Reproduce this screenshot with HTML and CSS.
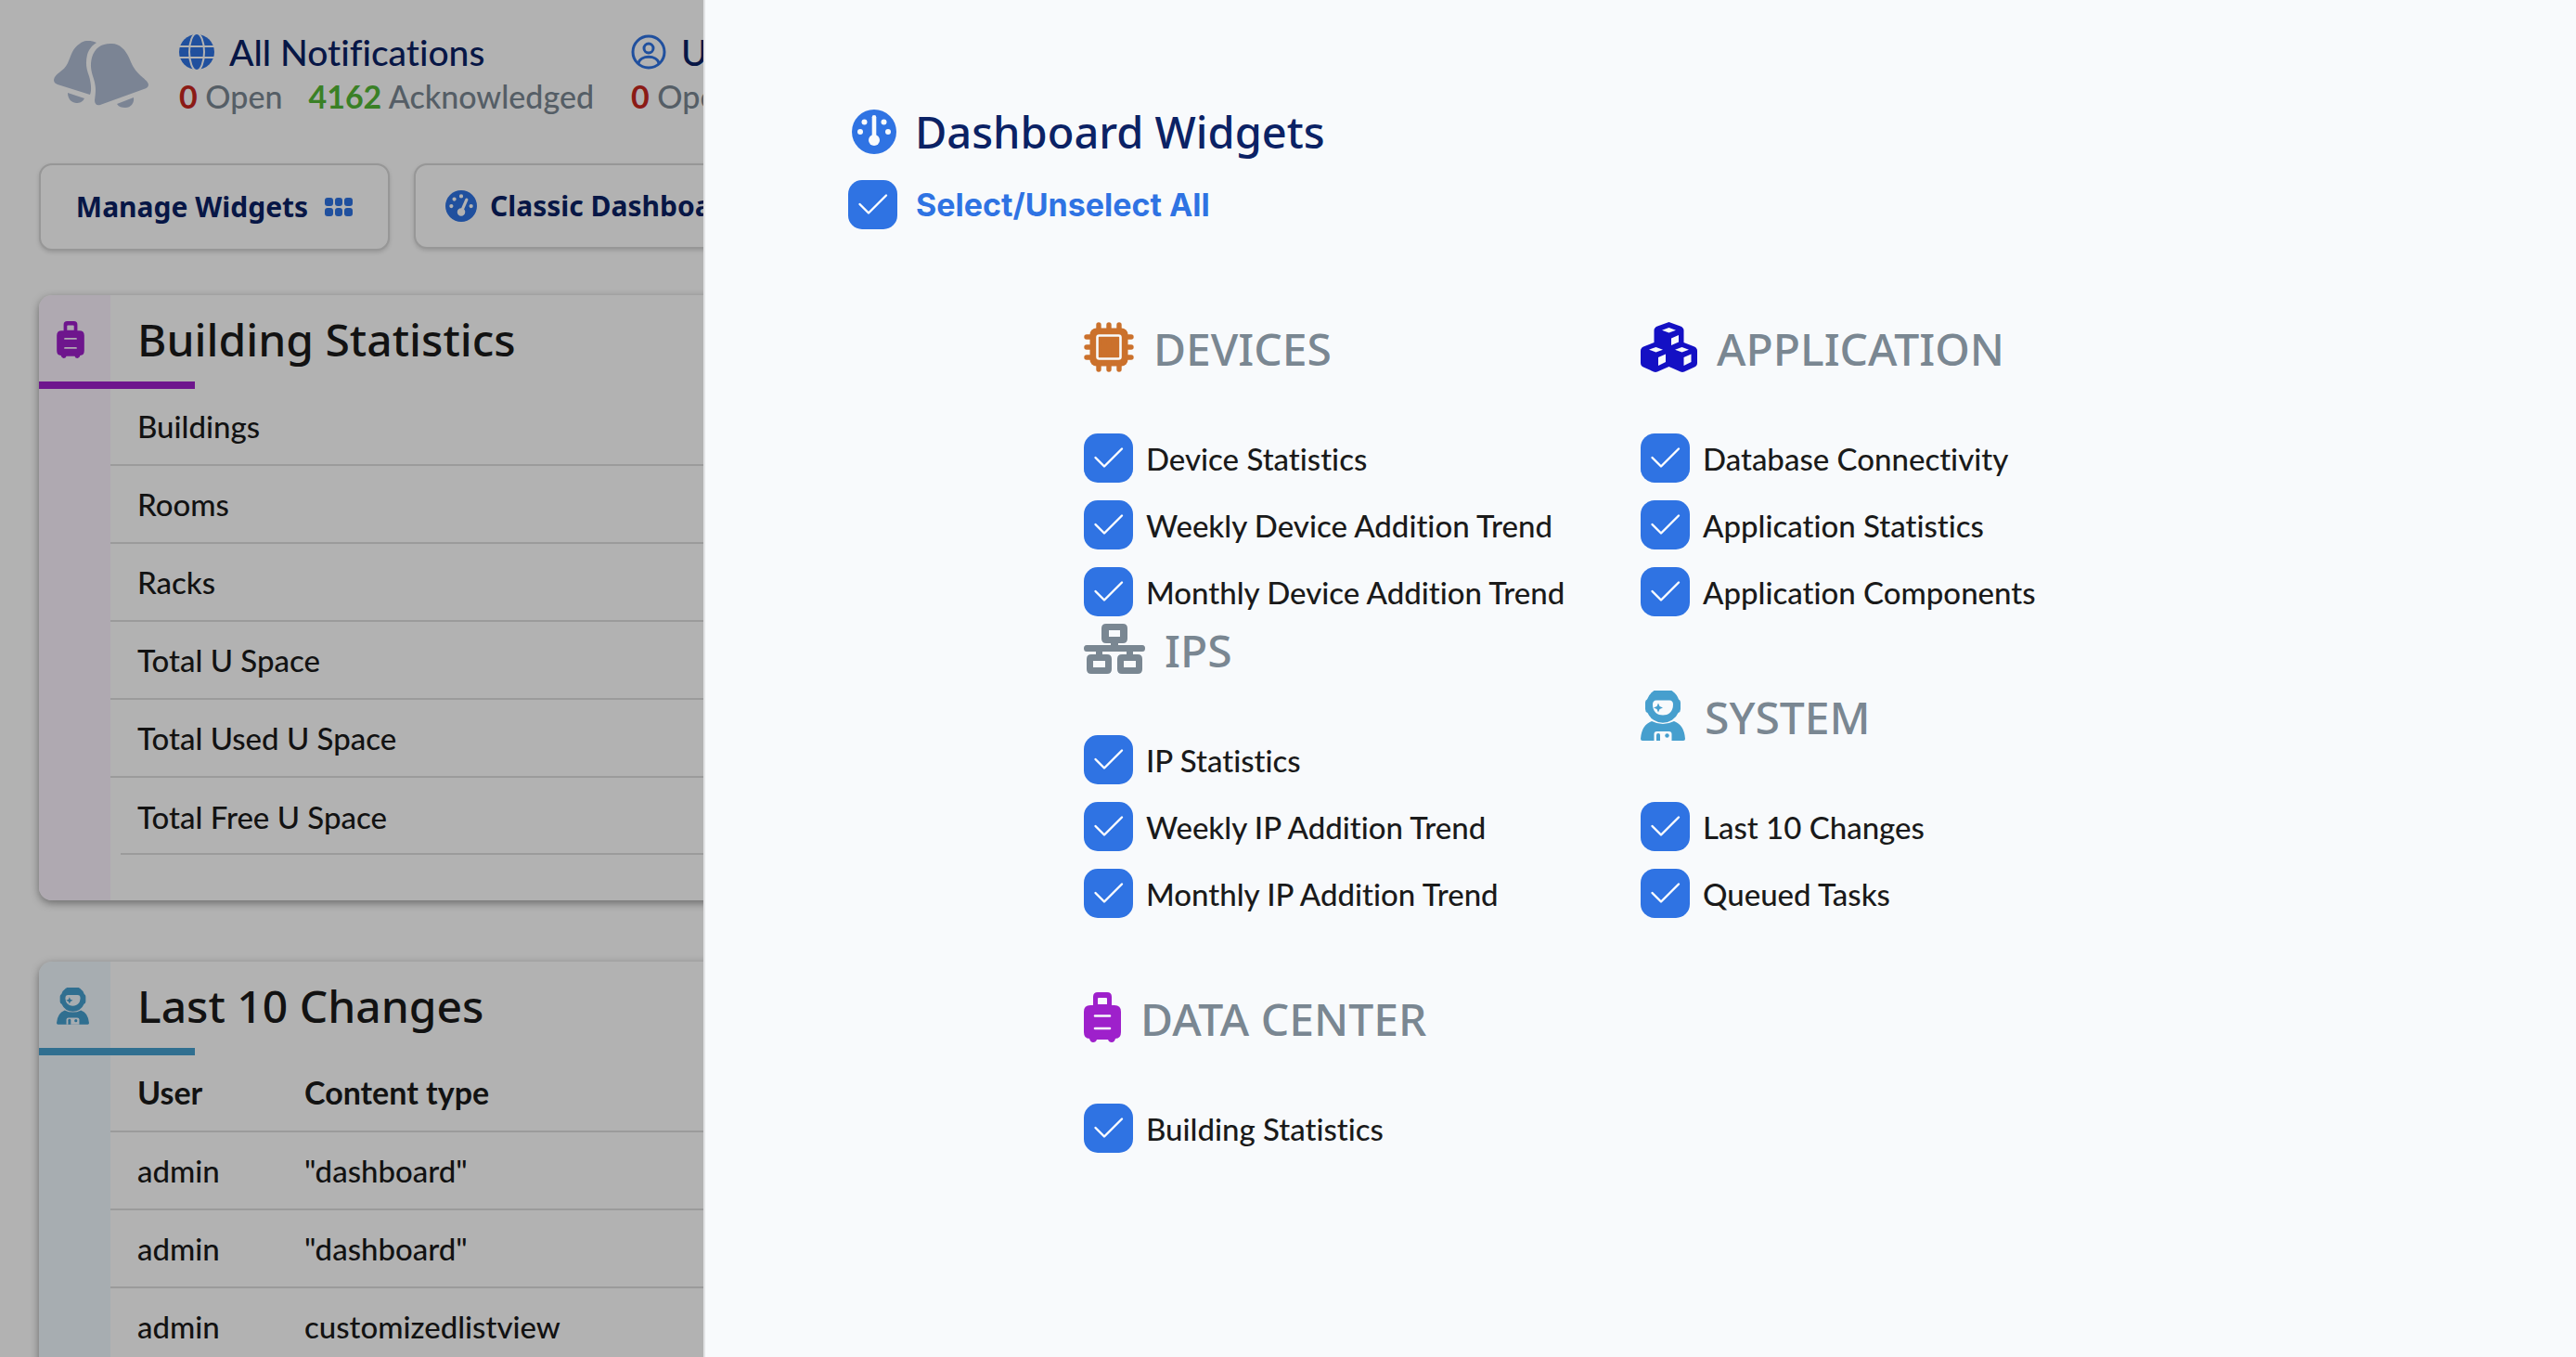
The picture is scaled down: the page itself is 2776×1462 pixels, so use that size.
FILE: index.html
```html
<!DOCTYPE html>
<html lang="en">
<head>
<meta charset="utf-8">
<title>Dashboard</title>
<link rel="stylesheet" href="styles.css">
</head>
<body>
<svg class="sprite" aria-hidden="true">
  <symbol id="i-bells" viewBox="0 0 102 72">
    <path d="M46 2C40-1 33-1 28 3C20 8 19 15 15 24C11 33 1 35 0 42C0 44 1 46 4 47L39 58C41 53 40 45 38 38C35 30 34 24 36 15C38 9 41 5 46 2Z"/>
    <path d="M61 3C70 2 77 9 81 18C84 25 86 30 92 36C97 41 101 43 102 47C102 50 100 51 97 52L50 69C46 70 44 68 44 64C45 56 46 51 43 41C40 32 39 26 41 18C44 8 51 3 61 3Z"/>
    <path d="M15 56L33 62C31 66 28 67 24 67C18 66 15 62 15 56Z"/>
    <path d="M68 68L86 61C87 67 83 72 77 72C73 72 70 71 68 68Z"/>
  </symbol>
  <symbol id="i-globe" viewBox="0 0 38 38">
    <circle cx="19" cy="19" r="19"/>
    <g class="cut-line" stroke-width="2"><path d="M0 13H38M0 25H38"/><ellipse cx="19" cy="19" rx="8" ry="20"/></g>
  </symbol>
  <symbol id="i-user" viewBox="0 0 38 38">
    <g fill="none" stroke="currentColor" stroke-width="3"><circle cx="19" cy="19" r="17"/><circle cx="19" cy="15" r="5"/><path d="M8 31C10 22 28 22 30 31"/></g>
  </symbol>
  <symbol id="i-grid" viewBox="0 0 30 20">
    <rect width="9" height="9" rx="3"/><rect x="11" width="8" height="9" rx="3"/><rect x="21" width="9" height="9" rx="3"/>
    <rect y="11" width="9" height="9" rx="3"/><rect x="11" y="11" width="8" height="9" rx="3"/><rect x="21" y="11" width="9" height="9" rx="3"/>
  </symbol>
  <symbol id="i-gauge-high" viewBox="0 0 512 512">
    <path d="M0 256a256 256 0 1 1 512 0A256 256 0 1 1 0 256zM288 96a32 32 0 1 0 -64 0 32 32 0 1 0 64 0zM256 416c35.3 0 64-28.7 64-64c0-17.4-6.9-33.1-18.1-44.6L366 161.7c5.3-12.1-.2-26.3-12.3-31.6s-26.3 .2-31.6 12.3L257.9 288c-.6 0-1.3 0-1.9 0c-35.3 0-64 28.7-64 64s28.7 64 64 64zM176 144a32 32 0 1 0 -64 0 32 32 0 1 0 64 0zM96 288a32 32 0 1 0 0-64 32 32 0 1 0 0 64zm352-32a32 32 0 1 0 -64 0 32 32 0 1 0 64 0z"/>
  </symbol>
  <symbol id="i-gauge" viewBox="0 0 48 48">
    <circle cx="24" cy="24" r="24"/>
    <g class="cut"><circle cx="13.5" cy="13.5" r="3"/><circle cx="34.5" cy="13.5" r="3"/><circle cx="9" cy="24" r="3"/><circle cx="39" cy="24" r="3"/><circle cx="24" cy="33" r="6"/><rect x="21.7" y="6" width="4.6" height="25" rx="2.3"/></g>
  </symbol>
  <symbol id="i-case" viewBox="0 0 40 54">
    <path fill-rule="evenodd" d="M10 14V5Q10 0 15 0H25Q30 0 30 5V14H33Q40 14 40 21V43Q40 50 34 50Q33 54 30 54Q27 54 26 51H14Q13 54 10 54Q7 54 6 50Q0 50 0 43V21Q0 14 7 14ZM15 13H25V7Q25 6 24 6H16Q15 6 15 7Z"/>
    <path class="cut-line" stroke-width="2.6" stroke-linecap="round" d="M12 25.500H28M12 39H28"/>
  </symbol>
  <symbol id="i-astro" viewBox="0 0 48 54">
    <path d="M7 9.500A18 18 0 0 1 41 9.500Q43 10 43 13V20Q43 23 40.500 24A18 18 0 0 1 7.500 24Q5 23 5 20V13Q5 10 7 9.500Z"/>
    <path d="M12 33Q24 39 36 33Q47 37 48 52Q48 54 46 54H2Q0 54 0 52Q1 37 12 33Z"/>
    <path class="cut" d="M17 10.500H31Q35 10.500 35 15C35 22 31 26.500 24 26.500S13 22 13 15Q13 10.500 17 10.500Z"/>
    <path d="M19 13.500L20.500 17L24 18.500L20.500 20L19 23.500L17.500 20L14 18.500L17.500 17Z"/>
    <path class="cut" d="M14.500 54V47Q14.500 44 17.500 44H30.500Q33.500 44 33.500 47V54Z"/>
    <path d="M17 54V48Q17 46 19 46Q21 46 21 48V54Z"/><circle cx="28.500" cy="48.500" r="2.200"/>
  </symbol>
  <symbol id="i-chip" viewBox="0 0 54 54">
    <rect x="6.500" y="6.500" width="41" height="41" rx="7"/>
    <path fill="none" stroke="currentColor" stroke-width="5.400" stroke-linecap="round" d="M16 3V51M27 3V51M38 3V51M3 16H51M3 27H51M3 38H51"/>
    <rect class="cut-line" x="14.500" y="14.500" width="25" height="25" rx="2" stroke-width="2.600"/>
  </symbol>
  <symbol id="i-net" viewBox="0 0 66 54">
    <path fill-rule="evenodd" d="M24 0H42Q47 0 47 5V16Q47 21 42 21H37V23H63Q66 23 66 26.500Q66 30 63 30H53V33H58Q63 33 63 38V49Q63 54 58 54H41Q36 54 36 49V38Q36 33 41 33H46V30H20V33H25Q30 33 30 38V49Q30 54 25 54H8Q3 54 3 49V38Q3 33 8 33H13V30H3Q0 30 0 26.500Q0 23 3 23H29V21H24Q19 21 19 16V5Q19 0 24 0ZM27 7V14H39V7ZM10 40V47H23V40ZM43 40V47H56V40Z"/>
  </symbol>
  <symbol id="i-cubes" viewBox="0 0 61 54">
    <path d="M30.500 0L43 4.500Q46.500 6 46.500 9V22L58 26.500Q61 28 61 31V44Q61 47 58 48.500L47 53.500Q45 54.300 43 53.500L30.500 48L18 53.500Q16 54.300 14 53.500L3 48.500Q0 47 0 44V31Q0 28 3 26.500L14.500 22V9Q14.500 6 18 4.500Z"/>
    <path class="cut" d="M30.500 6L38 8.700L30.500 11.500L23 8.700ZM16.500 27L24 29.700L16.500 32.500L9 29.700ZM44.500 27L52 29.700L44.500 32.500L37 29.700ZM33 17.500L41 14V21.500L33 25ZM19 38L27 34.500V43L19 47ZM46.500 38L54.500 34.500V43L46.500 47Z"/>
  </symbol>
</svg>

<main class="page">
  <section class="stats" aria-label="Notifications">
    <svg class="bells"><use href="#i-bells"/></svg>
    <div class="stat">
      <h2><svg class="stat-icon"><use href="#i-globe"/></svg>All Notifications</h2>
      <p><span><b class="open">0</b> Open</span><span><b class="ack">4162</b> Acknowledged</span></p>
    </div>
    <div class="stat">
      <h2><svg class="stat-icon"><use href="#i-user"/></svg>User</h2>
      <p><span><b class="open">0</b> Open</span></p>
    </div>
  </section>

  <div class="actions">
    <button type="button" class="btn btn-manage">Manage Widgets<svg class="grid-icon"><use href="#i-grid"/></svg></button>
    <button type="button" class="btn btn-classic"><svg class="gauge-icon"><use href="#i-gauge-high"/></svg>Classic Dashboard</button>
  </div>

  <section class="card purple">
    <header><span class="card-icon"><svg class="case-small"><use href="#i-case"/></svg></span><h2>Building Statistics</h2></header>
    <table>
      <tbody>
        <tr><td>Buildings</td></tr>
        <tr><td>Rooms</td></tr>
        <tr><td>Racks</td></tr>
        <tr><td>Total U Space</td></tr>
        <tr><td>Total Used U Space</td></tr>
        <tr><td>Total Free U Space</td></tr>
      </tbody>
    </table>
  </section>

  <section class="card blue">
    <header><span class="card-icon"><svg class="astro-small"><use href="#i-astro"/></svg></span><h2>Last 10 Changes</h2></header>
    <table>
      <thead><tr><th class="user-col" scope="col">User</th><th scope="col">Content type</th></tr></thead>
      <tbody>
        <tr><td>admin</td><td>"dashboard"</td></tr>
        <tr><td>admin</td><td>"dashboard"</td></tr>
        <tr><td>admin</td><td>customizedlistview</td></tr>
      </tbody>
    </table>
  </section>
</main>

<div class="backdrop"></div>

<aside class="drawer" aria-labelledby="drawer-title">
  <h1 id="drawer-title"><svg class="title-icon"><use href="#i-gauge"/></svg>Dashboard Widgets</h1>
  <label class="check all"><input type="checkbox" checked>Select/Unselect All</label>

  <div class="columns">
    <div class="column">
      <section class="group">
        <h2><svg class="w54 orange"><use href="#i-chip"/></svg>DEVICES</h2>
        <label class="check"><input type="checkbox" checked>Device Statistics</label>
        <label class="check"><input type="checkbox" checked>Weekly Device Addition Trend</label>
        <label class="check"><input type="checkbox" checked>Monthly Device Addition Trend</label>
      </section>
      <section class="group tight">
        <h2><svg class="w66"><use href="#i-net"/></svg>IPS</h2>
        <label class="check"><input type="checkbox" checked>IP Statistics</label>
        <label class="check"><input type="checkbox" checked>Weekly IP Addition Trend</label>
        <label class="check"><input type="checkbox" checked>Monthly IP Addition Trend</label>
      </section>
      <section class="group">
        <h2><svg class="w40 violet"><use href="#i-case"/></svg>DATA CENTER</h2>
        <label class="check"><input type="checkbox" checked>Building Statistics</label>
      </section>
    </div>
    <div class="column">
      <section class="group">
        <h2><svg class="w61 indigo"><use href="#i-cubes"/></svg>APPLICATION</h2>
        <label class="check"><input type="checkbox" checked>Database Connectivity</label>
        <label class="check"><input type="checkbox" checked>Application Statistics</label>
        <label class="check"><input type="checkbox" checked>Application Components</label>
      </section>
      <section class="group">
        <h2><svg class="w48 sky"><use href="#i-astro"/></svg>SYSTEM</h2>
        <label class="check"><input type="checkbox" checked>Last 10 Changes</label>
        <label class="check"><input type="checkbox" checked>Queued Tasks</label>
      </section>
    </div>
  </div>
</aside>
</body>
</html>
```
FILE: styles.css
```css
:root {
  --blue: #2f73e3;
  --navy: #0b2265;
  --gray: #7a8792;
  --ink: #1a1a1a;
  --line: #dedede;
  --cut: #fff;
  --body-font: Lato, "Open Sans", sans-serif;
  --head-font: "Noto Sans", "Open Sans", sans-serif;
}

* { box-sizing: border-box; }

body {
  margin: 0;
  height: 100vh;
  overflow: hidden;
  background: #fff;
  color: var(--ink);
  font: 500 33px/40px var(--body-font);
  font-variant-ligatures: none;
}

h1, h2, p { margin: 0; }

svg { display: block; flex: none; fill: currentColor; }
.sprite { position: absolute; width: 0; height: 0; }
.cut { fill: var(--cut); }
.cut-line { fill: none; stroke: var(--cut); }

/* page under the drawer */
.page { height: 100vh; overflow: hidden; padding: 32px 42px 0; white-space: nowrap; }

.stats { display: flex; height: 144px; padding-left: 16px; }
.bells { width: 102px; height: 72px; margin: 12px 33px 0 0; color: #b1bed5; }
.stat { margin-right: 40px; }
.stat h2 {
  display: flex;
  align-items: center;
  gap: 16px;
  color: var(--navy);
  font-size: 39px;
  font-weight: 500;
  line-height: 48px;
}
.stat-icon { width: 38px; height: 38px; color: var(--blue); }
.stat p { display: flex; gap: 28px; font-size: 34px; line-height: 48px; color: var(--gray); }
.stat b { font-weight: 700; }
.open { color: #c7281f; }
.ack { color: #53b837; }

.actions { display: flex; align-items: flex-start; gap: 26px; height: 142px; }
.btn {
  display: flex;
  align-items: center;
  border: 2px solid #d8d8d8;
  border-radius: 14px;
  background: #fff;
  box-shadow: 0 2px 4px rgba(0, 0, 0, .15);
  color: var(--navy);
  font: 700 30px/40px var(--head-font);
}
.btn-manage { width: 378px; height: 94px; justify-content: center; gap: 18px; }
.btn-classic { height: 92px; padding: 0 32px; gap: 14px; }
.grid-icon { width: 30px; height: 20px; color: var(--blue); }
.gauge-icon { width: 34px; height: 34px; color: var(--blue); }

.card {
  position: relative;
  margin-bottom: 66px;
  padding: 0 0 49px 77px;
  border-radius: 14px;
  background: linear-gradient(to right, var(--tint) 77px, #fff 77px);
  box-shadow: 0 3px 10px rgba(0, 0, 0, .4);
}
.purple { --accent: #9e20cb; --tint: #fbf3fe; --cut: #fbf3fe; }
.blue { --accent: #469fce; --tint: #f0f8fe; --cut: #f0f8fe; }
.card header {
  display: flex;
  align-items: flex-start;
  height: 99px;
  margin-left: -77px;
  padding-top: 28px;
}
.card header::after {
  content: "";
  position: absolute;
  top: 93px;
  left: 0;
  width: 168px;
  height: 8px;
  background: var(--accent);
}
.card-icon { width: 106px; padding-left: 19px; color: var(--accent); }
.case-small { width: 30px; height: 40px; }
.astro-small { width: 35px; height: 40px; }
.card h2 { font: 500 48px/40px var(--head-font); }

table { width: 100%; border-collapse: collapse; }
td, th {
  height: 84px;
  padding: 0 29px;
  border-bottom: 2px solid var(--line);
  text-align: left;
}
th { font-size: 34px; font-weight: 700; }
.user-col { width: 180px; }
.purple tr:last-child td {
  border-bottom: 0;
  background: linear-gradient(var(--line), var(--line)) 11px 100% / 100% 2px no-repeat;
}

.backdrop { position: fixed; inset: 0; background: rgba(0, 0, 0, .3); }

/* drawer */
.drawer {
  --cut: #f8fafc;
  position: fixed;
  inset: 0 0 0 auto;
  width: calc(100% - 758px);
  padding: 116px 0 0 154px;
  border-left: 2px solid #e2e3e5;
  background: #f8fafc;
  white-space: nowrap;
}
.drawer h1 {
  display: flex;
  align-items: center;
  gap: 20px;
  height: 52px;
  padding-left: 4px;
  color: var(--navy);
  font: 500 47px/52px var(--head-font);
}
.title-icon { width: 48px; height: 48px; color: var(--blue); }

.check {
  display: flex;
  align-items: center;
  gap: 14px;
  width: max-content;
  margin-bottom: 19px;
}
.check input {
  appearance: none;
  width: 53px;
  height: 53px;
  margin: 0;
  border-radius: 15px;
  background: var(--blue) url("data:image/svg+xml,%3Csvg xmlns='http://www.w3.org/2000/svg' viewBox='0 0 53 53'%3E%3Cpath d='M12.500 26L22 35.500L41 16.500' fill='none' stroke='white' stroke-width='2.400' stroke-linecap='round' stroke-linejoin='round'/%3E%3C/svg%3E") center / 100%;
}
.check.all {
  gap: 20px;
  margin: 26px 0 0;
  color: var(--blue);
  font: 700 34px/40px Inter, sans-serif;
}

.columns {
  display: grid;
  grid-template-columns: 600px 600px;
  margin: 100px 0 0 254px;
}
.group { margin-bottom: 80px; }
.group:has(+ .tight) { margin-bottom: 8px; }
.group .check:last-child { margin-bottom: 0; }
.group h2 {
  display: flex;
  align-items: flex-start;
  gap: 21px;
  height: 120px;
  color: var(--gray);
  font: 500 48px/58px var(--head-font);
}
.group svg { height: 54px; }
.w40 { width: 40px; }
.w48 { width: 48px; }
.w54 { width: 54px; }
.w61 { width: 61px; }
.w66 { width: 66px; }
.orange { color: #cb712c; }
.violet { color: #9e20cb; }
.indigo { color: #1410c4; }
.sky { color: #469fce; }
```
